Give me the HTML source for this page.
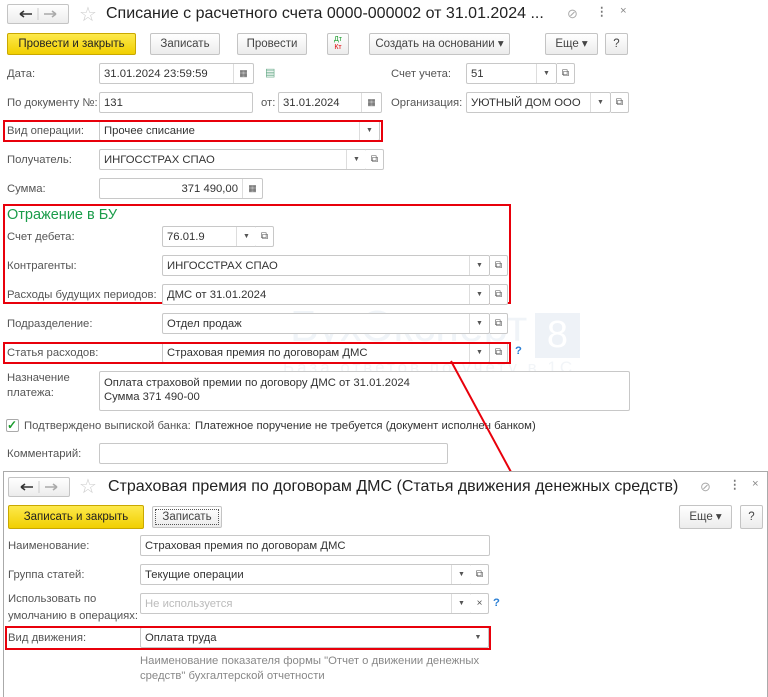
<!DOCTYPE html><html><head><meta charset="utf-8"><style>
*{box-sizing:border-box}body{margin:0;width:768px;height:697px;background:#fff;font-family:"Liberation Sans",sans-serif;font-size:11.3px;color:#333;position:relative;overflow:hidden}
.a{position:absolute;white-space:nowrap}
.l{position:absolute;color:#555;font-size:11.3px;white-space:nowrap;margin-top:1px}
.in{position:absolute;height:21px;border:1px solid #c8c8c8;border-radius:2px;background:#fff;padding:4px 4px 0;line-height:13px;font-size:11.3px;color:#333;white-space:nowrap;overflow:hidden}
.dd{position:absolute;top:0;right:0;width:20px;height:19px;border-left:1px solid #ddd;text-align:center;font-size:7px;line-height:19px;color:#555}
.cp{position:absolute;width:18px;height:21px;border:1px solid #c8c8c8;border-left:none;border-radius:0 2px 2px 0;background:#fff;font-size:10px;text-align:center;line-height:19px;color:#555}
.b{position:absolute;height:22px;border:1px solid #c4c4c4;border-radius:2px;background:linear-gradient(#fff,#ececec);text-align:center;line-height:20px;font-size:11.5px;color:#444}
.y{background:linear-gradient(#fde94c,#f1cf00);border-color:#c9a800;color:#222}
.r{position:absolute;border:2px solid #e8000b}
</style></head><body>
<!-- top window -->
<div class="b" style="left:7px;top:4px;width:62px;height:20px"><svg width="60" height="18"><path d="M12 9h12M12 9l4-3M12 9l4 3" stroke="#333" stroke-width="1.6" fill="none"/><line x1="30" y1="3" x2="30" y2="15" stroke="#ccc"/><path d="M36 9h12M48 9l-4-3M48 9l-4 3" stroke="#aaa" stroke-width="1.6" fill="none"/></svg></div>
<div class="a" style="left:79px;top:2px;font-size:20px;color:#ccc">☆</div>
<div class="a" style="left:106px;top:5px;font-size:16px;color:#222">Списание с расчетного счета 0000-000002 от 31.01.2024 ...</div>
<div class="a" style="left:567px;top:6px;color:#aaa;font-size:13px">⊘</div>
<div class="a" style="left:596px;top:5px;color:#777;font-weight:bold">⋮</div>
<div class="a" style="left:620px;top:5px;color:#888">×</div>
<div class="b y" style="left:7px;top:33px;width:129px">Провести и закрыть</div>
<div class="b" style="left:150px;top:33px;width:70px">Записать</div>
<div class="b" style="left:237px;top:33px;width:70px">Провести</div>
<div class="b" style="left:327px;top:33px;width:22px;font-size:7px;line-height:8px;padding-top:2px"><span style="color:#1a9c2c">Дт</span><br><span style="color:#d00">Кт</span></div>
<div class="b" style="left:369px;top:33px;width:141px">Создать на основании ▾</div>
<div class="b" style="left:545px;top:33px;width:53px">Еще ▾</div>
<div class="b" style="left:605px;top:33px;width:23px">?</div>

<div class="l" style="left:7px;top:67px">Дата:</div>
<div class="in" style="left:99px;top:63px;width:155px">31.01.2024 23:59:59<div class="dd" style="font-size:9px">▦</div></div>
<div class="a" style="left:265px;top:66px;color:#6a8;font-size:11px">▤</div>
<div class="l" style="left:391px;top:67px">Счет учета:</div>
<div class="in" style="left:466px;top:63px;width:91px">51<div class="dd">▼</div></div><div class="cp" style="left:557px;top:63px">⧉</div>

<div class="l" style="left:7px;top:96px">По документу №:</div>
<div class="in" style="left:99px;top:92px;width:154px">131</div>
<div class="l" style="left:261px;top:96px">от:</div>
<div class="in" style="left:278px;top:92px;width:104px">31.01.2024<div class="dd" style="font-size:9px">▦</div></div>
<div class="l" style="left:391px;top:96px">Организация:</div>
<div class="in" style="left:466px;top:92px;width:145px">УЮТНЫЙ ДОМ ООО<div class="dd">▼</div></div><div class="cp" style="left:611px;top:92px">⧉</div>

<div class="l" style="left:7px;top:124px">Вид операции:</div>
<div class="in" style="left:99px;top:120px;width:281px">Прочее списание<div class="dd">▼</div></div>
<div class="r" style="left:3px;top:120px;width:380px;height:22px"></div>

<div class="l" style="left:7px;top:153px">Получатель:</div>
<div class="in" style="left:99px;top:149px;width:268px">ИНГОССТРАХ СПАО<div class="dd">▼</div></div><div class="cp" style="left:366px;top:149px">⧉</div>

<div class="l" style="left:7px;top:182px">Сумма:</div>
<div class="in" style="left:99px;top:178px;width:164px;text-align:right;padding-right:24px">371 490,00<div class="dd" style="font-size:9px">▦</div></div>

<div class="a" style="left:290px;top:302px;font-size:44px;color:#f0f4f8">БухЭксперт</div>
<div class="a" style="left:535px;top:313px;width:45px;height:45px;background:#eef2f7;color:#fff;font-size:38px;text-align:center;line-height:45px">8</div>
<div class="a" style="left:283px;top:358px;font-size:17px;color:#f2f5f8;letter-spacing:3px">База ответов по учету в 1С</div>

<div class="r" style="left:3px;top:204px;width:508px;height:100px"></div>
<div class="a" style="left:7px;top:207px;font-size:14.5px;color:#1a9c4a">Отражение в БУ</div>
<div class="l" style="left:7px;top:230px">Счет дебета:</div>
<div class="in" style="left:162px;top:226px;width:95px">76.01.9<div class="dd">▼</div></div><div class="cp" style="left:256px;top:226px">⧉</div>
<div class="l" style="left:7px;top:259px">Контрагенты:</div>
<div class="in" style="left:162px;top:255px;width:328px">ИНГОССТРАХ СПАО<div class="dd">▼</div></div><div class="cp" style="left:490px;top:255px">⧉</div>
<div class="l" style="left:7px;top:288px">Расходы будущих периодов:</div>
<div class="in" style="left:162px;top:284px;width:328px">ДМС от 31.01.2024<div class="dd">▼</div></div><div class="cp" style="left:490px;top:284px">⧉</div>

<div class="l" style="left:7px;top:317px">Подразделение:</div>
<div class="in" style="left:162px;top:313px;width:328px">Отдел продаж<div class="dd">▼</div></div><div class="cp" style="left:490px;top:313px">⧉</div>
<div class="l" style="left:7px;top:346px">Статья расходов:</div>
<div class="in" style="left:162px;top:342px;width:328px">Страховая премия по договорам ДМС<div class="dd">▼</div></div><div class="cp" style="left:490px;top:342px">⧉</div>
<div class="r" style="left:3px;top:342px;width:508px;height:22px"></div>
<div class="a" style="left:515px;top:345px;color:#2a7fd4;font-weight:bold">?</div>

<div class="l" style="left:7px;top:370px;line-height:15px">Назначение<br>платежа:</div>
<div class="in" style="left:99px;top:371px;width:531px;height:40px;white-space:normal;line-height:14px;padding-top:4px">Оплата страховой премии по договору ДМС от 31.01.2024<br>Сумма 371 490-00</div>
<div class="a" style="left:6px;top:419px;width:13px;height:13px;border:1px solid #aaa;border-radius:2px;color:#1a9c2c;font-size:12px;line-height:11px;font-weight:bold">✓</div>
<div class="l" style="left:24px;top:419px">Подтверждено выпиской банка:</div>
<div class="a" style="left:195px;top:420px">Платежное поручение не требуется (документ исполнен банком)</div>
<div class="l" style="left:7px;top:447px">Комментарий:</div>
<div class="in" style="left:99px;top:443px;width:349px"></div>

<svg class="a" style="left:0;top:0" width="768" height="697"><line x1="451" y1="361" x2="511" y2="472" stroke="#e8000b" stroke-width="2"/></svg>

<!-- bottom window -->
<div class="a" style="left:3px;top:471px;width:765px;height:226px;background:#fff;border:1px solid #aaa;border-bottom:none"></div>
<div class="b" style="left:8px;top:477px;width:62px;height:20px"><svg width="60" height="18"><path d="M12 9h12M12 9l4-3M12 9l4 3" stroke="#333" stroke-width="1.6" fill="none"/><line x1="30" y1="3" x2="30" y2="15" stroke="#ccc"/><path d="M36 9h12M48 9l-4-3M48 9l-4 3" stroke="#aaa" stroke-width="1.6" fill="none"/></svg></div>
<div class="a" style="left:79px;top:474px;font-size:20px;color:#ccc">☆</div>
<div class="a" style="left:108px;top:478px;font-size:16px;color:#222">Страховая премия по договорам ДМС (Статья движения денежных средств)</div>
<div class="a" style="left:700px;top:479px;color:#aaa;font-size:13px">⊘</div>
<div class="a" style="left:729px;top:478px;color:#777;font-weight:bold">⋮</div>
<div class="a" style="left:752px;top:478px;color:#888">×</div>
<div class="b y" style="left:8px;top:505px;width:136px;height:24px;line-height:22px">Записать и закрыть</div>
<div class="b" style="left:152px;top:506px;width:70px;height:22px;outline:1px dotted #555;outline-offset:-4px">Записать</div>
<div class="b" style="left:679px;top:505px;width:53px;height:24px;line-height:22px">Еще ▾</div>
<div class="b" style="left:740px;top:505px;width:23px;height:24px;line-height:22px">?</div>

<div class="l" style="left:8px;top:539px">Наименование:</div>
<div class="in" style="left:140px;top:535px;width:350px">Страховая премия по договорам ДМС</div>
<div class="l" style="left:8px;top:568px">Группа статей:</div>
<div class="in" style="left:140px;top:564px;width:332px">Текущие операции<div class="dd">▼</div></div><div class="cp" style="left:471px;top:564px">⧉</div>
<div class="l" style="left:8px;top:590px;line-height:17px">Использовать по<br>умолчанию в операциях:</div>
<div class="in" style="left:140px;top:593px;width:332px;color:#bbb">Не используется<div class="dd">▼</div></div><div class="cp" style="left:471px;top:593px">×</div>
<div class="a" style="left:493px;top:597px;color:#2a7fd4;font-weight:bold">?</div>
<div class="l" style="left:8px;top:631px">Вид движения:</div>
<div class="in" style="left:140px;top:627px;width:349px">Оплата труда<div class="dd" style="border:none">▼</div></div>
<div class="r" style="left:5px;top:626px;width:486px;height:24px"></div>
<div class="a" style="left:140px;top:654px;color:#888;line-height:15px">Наименование показателя формы "Отчет о движении денежных<br>средств" бухгалтерской отчетности</div>
</body></html>
